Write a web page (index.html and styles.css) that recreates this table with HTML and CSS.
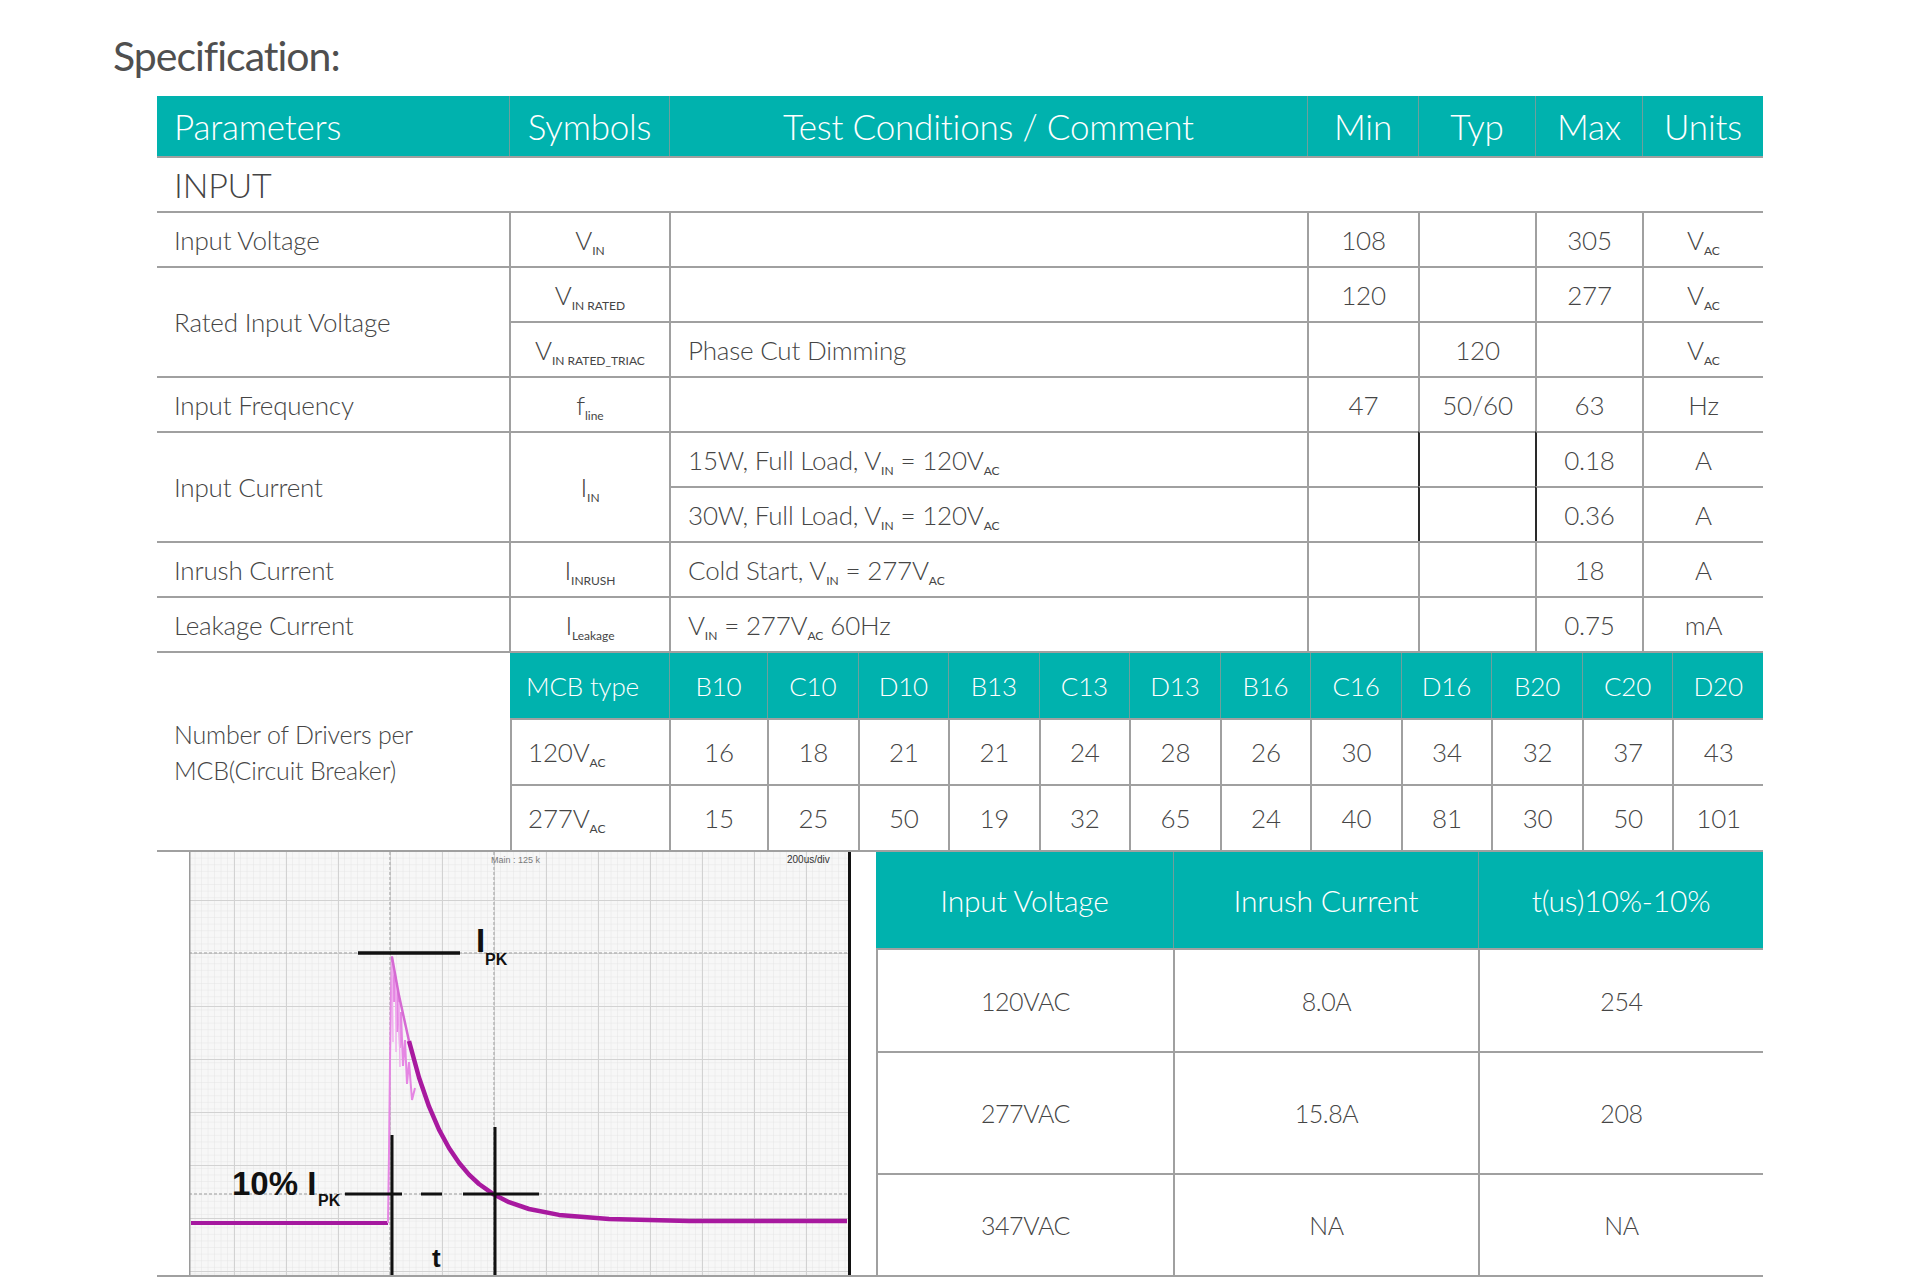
FILE: index.html
```html
<!DOCTYPE html>
<html lang="en">
<head>
<meta charset="utf-8">
<title>Specification</title>
<link rel="stylesheet" href="styles.css">
</head>
<body>
<main class="page">
  <h1 class="title">Specification:</h1>
  <div class="sheet">
    <table class="spec">
      <colgroup>
        <col class="c-param"><col class="c-sym"><col class="c-cond"><col class="c-min"><col class="c-typ"><col class="c-max"><col class="c-unit">
      </colgroup>
      <tr class="head">
        <th class="first">Parameters</th>
        <th>Symbols</th>
        <th>Test Conditions / Comment</th>
        <th>Min</th>
        <th>Typ</th>
        <th>Max</th>
        <th>Units</th>
      </tr>
      <tr class="section">
        <td colspan="7">INPUT</td>
      </tr>
      <tr>
        <td class="first">Input Voltage</td>
        <td>V<span class="sb">IN</span></td>
        <td class="cond"></td>
        <td>108</td>
        <td></td>
        <td>305</td>
        <td>V<span class="sb">AC</span></td>
      </tr>
      <tr>
        <td class="first" rowspan="2">Rated Input Voltage</td>
        <td>V<span class="sb">IN RATED</span></td>
        <td class="cond"></td>
        <td>120</td>
        <td></td>
        <td>277</td>
        <td>V<span class="sb">AC</span></td>
      </tr>
      <tr>
        <td>V<span class="sb">IN RATED_TRIAC</span></td>
        <td class="cond">Phase Cut Dimming</td>
        <td></td>
        <td>120</td>
        <td></td>
        <td>V<span class="sb">AC</span></td>
      </tr>
      <tr>
        <td class="first">Input Frequency</td>
        <td>f<span class="sb">line</span></td>
        <td class="cond"></td>
        <td>47</td>
        <td>50/60</td>
        <td>63</td>
        <td>Hz</td>
      </tr>
      <tr>
        <td class="first" rowspan="2">Input Current</td>
        <td rowspan="2">I<span class="sb">IN</span></td>
        <td class="cond">15W, Full Load, V<span class="sb">IN</span> = 120V<span class="sb">AC</span></td>
        <td></td>
        <td class="dark"></td>
        <td class="dark">0.18</td>
        <td>A</td>
      </tr>
      <tr>
        <td class="cond">30W, Full Load, V<span class="sb">IN</span> = 120V<span class="sb">AC</span></td>
        <td></td>
        <td class="dark"></td>
        <td class="dark">0.36</td>
        <td>A</td>
      </tr>
      <tr>
        <td class="first">Inrush Current</td>
        <td>I<span class="sb">INRUSH</span></td>
        <td class="cond">Cold Start, V<span class="sb">IN</span> = 277V<span class="sb">AC</span></td>
        <td></td>
        <td></td>
        <td>18</td>
        <td>A</td>
      </tr>
      <tr>
        <td class="first">Leakage Current</td>
        <td>I<span class="sb">Leakage</span></td>
        <td class="cond">V<span class="sb">IN</span> = 277V<span class="sb">AC</span> 60Hz</td>
        <td></td>
        <td></td>
        <td>0.75</td>
        <td>mA</td>
      </tr>
    </table>

    <div class="mcb">
      <div class="mcb-label">Number of Drivers per<br>MCB(Circuit Breaker)</div>
      <table class="mcbt">
        <colgroup>
          <col class="m-type"><col class="m-first"><col><col><col><col><col><col><col><col><col><col><col>
        </colgroup>
        <tr class="mhead">
          <th>MCB type</th><th>B10</th><th>C10</th><th>D10</th><th>B13</th><th>C13</th><th>D13</th><th>B16</th><th>C16</th><th>D16</th><th>B20</th><th>C20</th><th>D20</th>
        </tr>
        <tr>
          <td>120V<span class="sb">AC</span></td><td>16</td><td>18</td><td>21</td><td>21</td><td>24</td><td>28</td><td>26</td><td>30</td><td>34</td><td>32</td><td>37</td><td>43</td>
        </tr>
        <tr>
          <td>277V<span class="sb">AC</span></td><td>15</td><td>25</td><td>50</td><td>19</td><td>32</td><td>65</td><td>24</td><td>40</td><td>81</td><td>30</td><td>50</td><td>101</td>
        </tr>
      </table>
    </div>

    <div class="bottom">
      <svg class="scope" width="662" height="423" viewBox="0 0 662 423" xmlns="http://www.w3.org/2000/svg">
        <defs>
          <pattern id="fine" width="6.5" height="6.6" patternUnits="userSpaceOnUse" x="0" y="0">
            <path d="M6.5 0V6.6M0 6.6H6.5" stroke="#e6e6e6" stroke-width="1" fill="none"/>
          </pattern>
          <pattern id="major" width="52" height="53" patternUnits="userSpaceOnUse" x="45" y="48">
            <path d="M0.5 0V53M0 0.5H52" stroke="#d2d2d2" stroke-width="1" fill="none"/>
          </pattern>
        </defs>
        <rect x="0" y="0" width="662" height="423" fill="#f7f7f7"/>
        <rect x="0" y="0" width="662" height="423" fill="url(#fine)"/>
        <rect x="0" y="0" width="662" height="423" fill="url(#major)"/>
        <path d="M0 101H659M0 342H659" stroke="#b8b8b8" stroke-width="1.5" stroke-dasharray="3 2" fill="none"/>
        <path d="M201 0V423M305 0V423" stroke="#b8b8b8" stroke-width="1.5" stroke-dasharray="3 2" fill="none"/>
        <path d="M0.75 0V423" stroke="#9a9a9a" stroke-width="1.5"/>
        <path d="M660.5 0V423" stroke="#111" stroke-width="3"/>
        <text class="sc-tiny" x="302" y="11">Main : 125 k</text>
        <text class="sc-small" x="598" y="11">200us/div</text>
        <path d="M2 371H199" stroke="#a5189f" stroke-width="4" fill="none"/>
        <path d="M199 371L200 300L201 210L202 140L203 104L205 150L206 122L208 180L209 138L211 196L212 160L214 214L216 188L218 232L220 210L223 248L226 236" stroke="#e586e3" stroke-width="2" fill="none"/>
        <path d="M203 110L204 190M207 130L207 200M210 150L211 215" stroke="#f0b0ee" stroke-width="1.5" fill="none"/>
        <path d="M220 189L230 225.5L240 254.4L250 277.6L260 296L270 310.8L280 322.6L290 332L305 342.6L320 350.2L340 357L370 362.9L420 367L500 369L658 369" stroke="#a8199f" stroke-width="4.5" fill="none" stroke-linejoin="round"/>
        <path d="M203 105L210 143.6L220 189" stroke="#d56ad3" stroke-width="2.5" fill="none"/>
        <path d="M169 101H271" stroke="#111" stroke-width="3.5"/>
        <path d="M203 283V423M306 275V423" stroke="#111" stroke-width="3"/>
        <path d="M156 342H213M232 342H253M274 342H350" stroke="#111" stroke-width="3"/>
        <text class="sc-big" x="287" y="100">I</text>
        <text class="sc-sub" x="296" y="113">PK</text>
        <text class="sc-big" x="43" y="343">10% I</text>
        <text class="sc-sub" x="129" y="354">PK</text>
        <text class="sc-t" x="243" y="415">t</text>
      </svg>
      <table class="inrush">
        <colgroup><col class="i1"><col class="i2"><col class="i3"></colgroup>
        <tr class="ihead"><th>Input Voltage</th><th>Inrush Current</th><th>t(us)10%-10%</th></tr>
        <tr class="r1"><td>120VAC</td><td>8.0A</td><td>254</td></tr>
        <tr class="r2"><td>277VAC</td><td>15.8A</td><td>208</td></tr>
        <tr class="r3"><td>347VAC</td><td>NA</td><td>NA</td></tr>
      </table>
    </div>
  </div>
</main>
</body>
</html>
```
FILE: styles.css
```css
* { box-sizing: border-box; }

:root {
  --teal: #00b2ae;
  --line: #a0a0a0;
  --sep: #6f9f9c;
  --ink: #454545;
}

html, body {
  margin: 0;
  background: #ffffff;
}

body {
  font-family: Lato, "Noto Sans", "Liberation Sans", sans-serif;
  font-weight: 300;
  color: var(--ink);
}

.page {
  padding: 31px 0 0 113px;
}

.title {
  margin: 0;
  height: 50px;
  font-size: 41px;
  line-height: 50px;
  font-weight: 400;
  letter-spacing: -1px;
  color: #4f4f4f;
}

.sheet {
  margin: 15px 0 0 44px;
  width: 1606px;
}

/* ---------- main spec table ---------- */
.spec {
  width: 1606px;
  table-layout: fixed;
  border-collapse: separate;
  border-spacing: 0;
}

.c-param { width: 352px; }
.c-sym { width: 160px; }
.c-cond { width: 638px; }
.c-min { width: 111px; }
.c-typ { width: 117px; }
.c-max { width: 107px; }
.c-unit { width: 121px; }

.spec tr { height: 55px; }
.spec tr.head { height: 60px; }

.spec td,
.spec th {
  padding: 0 6px;
  font-size: 26px;
  font-weight: 300;
  letter-spacing: -0.2px;
  text-align: center;
  vertical-align: middle;
  white-space: nowrap;
  border-top: 2px solid var(--line);
  border-left: 2px solid var(--line);
}

.spec th {
  background: var(--teal);
  color: #ffffff;
  font-size: 35px;
  letter-spacing: -0.2px;
  border-top: none;
  border-left: 1px solid var(--sep);
}

.spec .first {
  border-left: none;
  text-align: left;
  padding-left: 17px;
}

.spec .cond {
  text-align: left;
  padding-left: 17px;
}

.spec .section td {
  border-left: none;
  text-align: left;
  padding-left: 17px;
  font-size: 34px;
  color: #444444;
}

.spec td.dark {
  border-left-color: #2a2a2a;
}

.sb {
  font-size: 12px;
  font-weight: 400;
  line-height: 0;
  vertical-align: -5px;
  letter-spacing: 0;
}

/* ---------- MCB block ---------- */
.mcb {
  display: flex;
  border-top: 2px solid var(--line);
}

.mcb-label {
  width: 353px;
  flex: none;
  display: flex;
  align-items: center;
  padding-left: 17px;
  font-size: 25px;
  line-height: 36px;
  letter-spacing: -0.2px;
}

.mcbt {
  width: 1253px;
  table-layout: fixed;
  border-collapse: separate;
  border-spacing: 0;
}

.m-type { width: 159px; }
.m-first { width: 98px; }

.mcbt tr { height: 66px; }
.mcbt tr.mhead { height: 65px; }

.mcbt th {
  background: var(--teal);
  color: #ffffff;
  font-size: 26px;
  font-weight: 300;
  letter-spacing: -0.2px;
  border-left: 1px solid var(--sep);
  text-align: center;
  padding: 0;
}

.mcbt th:first-child {
  border-left: none;
  text-align: left;
  padding-left: 16px;
}

.mcbt td {
  font-size: 26px;
  letter-spacing: -0.2px;
  text-align: center;
  padding: 0;
  border-top: 2px solid var(--line);
  border-left: 2px solid var(--line);
}

.mcbt td:first-child {
  text-align: left;
  padding-left: 16px;
}

/* ---------- bottom: scope + inrush ---------- */
.bottom {
  display: flex;
  align-items: flex-start;
  gap: 25px;
  padding-left: 32px;
  border-top: 2px solid var(--line);
  border-bottom: 2px solid var(--line);
}

.scope {
  display: block;
  flex: none;
}

.sc-tiny {
  font-family: "Liberation Sans", sans-serif;
  font-size: 9px;
  fill: #7a7a7a;
}

.sc-small {
  font-family: "Liberation Sans", sans-serif;
  font-size: 10px;
  fill: #333333;
}

.sc-big {
  font-family: "Liberation Sans", sans-serif;
  font-weight: 700;
  font-size: 33px;
  fill: #111111;
}

.sc-sub {
  font-family: "Liberation Sans", sans-serif;
  font-weight: 700;
  font-size: 16px;
  fill: #111111;
}

.sc-t {
  font-family: "Liberation Sans", sans-serif;
  font-weight: 700;
  font-size: 26px;
  fill: #111111;
}

.inrush {
  width: 887px;
  flex: none;
  table-layout: fixed;
  border-collapse: separate;
  border-spacing: 0;
}

.i1 { width: 297px; }
.i2 { width: 305px; }
.i3 { width: 285px; }

.inrush tr.ihead { height: 96px; }
.inrush tr.r1 { height: 103px; }
.inrush tr.r2 { height: 122px; }
.inrush tr.r3 { height: 102px; }

.inrush th {
  background: var(--teal);
  color: #ffffff;
  font-size: 30px;
  font-weight: 300;
  letter-spacing: -0.2px;
  border-left: 1px solid var(--sep);
  text-align: center;
  padding: 0;
}

.inrush th:first-child {
  border-left: none;
}

.inrush td {
  font-size: 25px;
  letter-spacing: -0.4px;
  text-align: center;
  padding: 0;
  border-top: 2px solid var(--line);
  border-left: 2px solid var(--line);
}
```
